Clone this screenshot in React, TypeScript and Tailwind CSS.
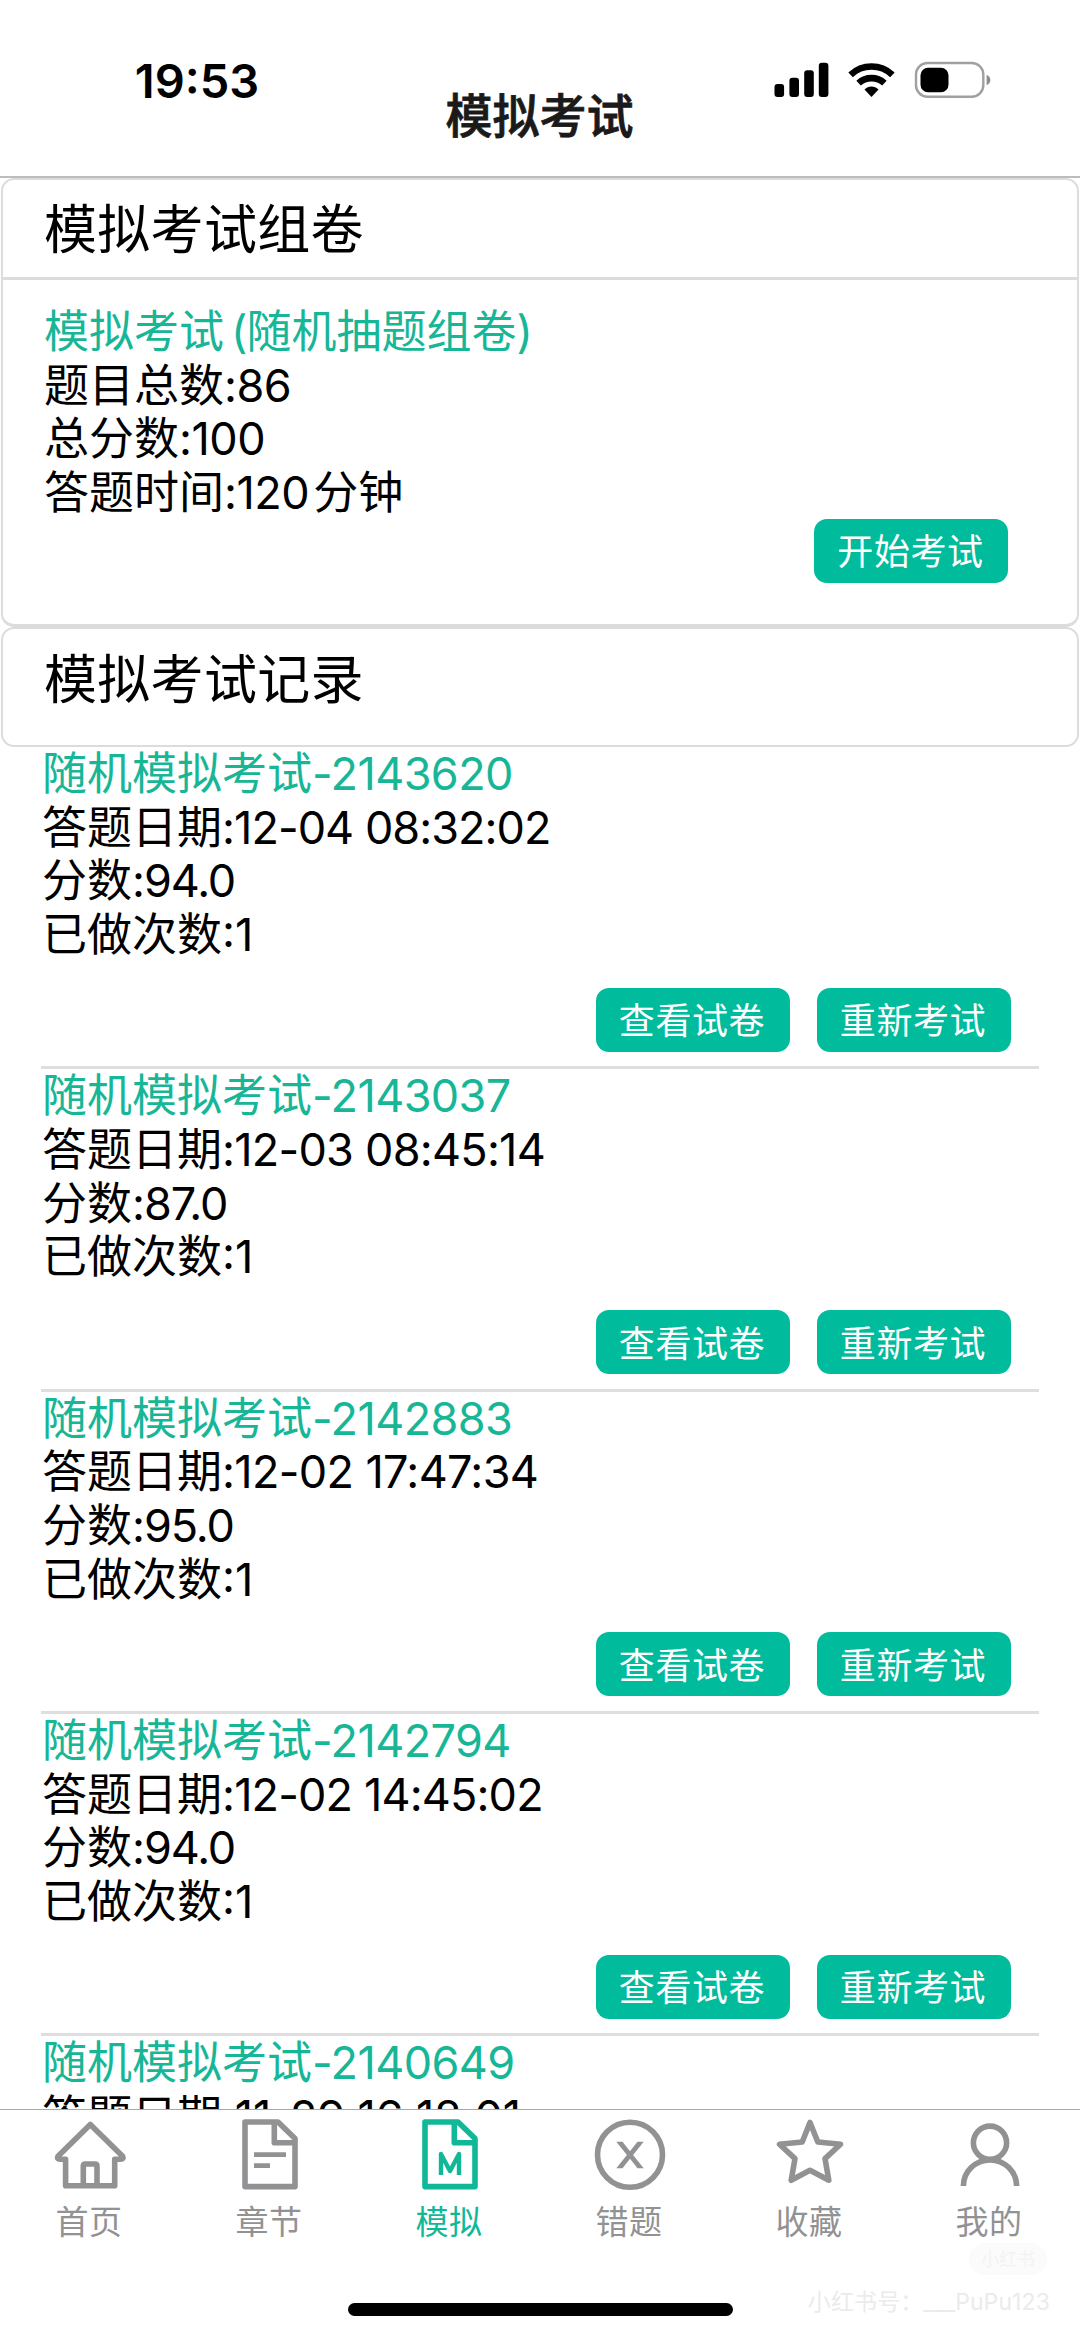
import type { ReactNode } from "react";
import clsx from "clsx";

type ExamRecord = {
  id: string;
  date: string;
  dateClass: string;
  score?: string;
  times?: number;
};

const RECORDS: ExamRecord[] = [
  { id: "2143620", date: "12-04 08:32:02", dateClass: "tracking-[-0.95px]", score: "94.0", times: 1 },
  { id: "2143037", date: "12-03 08:45:14", dateClass: "tracking-[-0.75px]", score: "87.0", times: 1 },
  { id: "2142883", date: "12-02 17:47:34", dateClass: "tracking-[-0.65px]", score: "95.0", times: 1 },
  { id: "2142794", date: "12-02 14:45:02", dateClass: "tracking-[-0.85px]", score: "94.0", times: 1 },
  { id: "2140649", date: "11-29 16:18:01", dateClass: "tracking-[-0.2px]" },
];

function StatusIcons() {
  return (
    <svg width="217" height="38" viewBox="774 61 217 38">
      <rect x="774.5" y="84" width="9.6" height="13" rx="3" />
      <rect x="789.4" y="77.7" width="9.6" height="19.3" rx="3" />
      <rect x="804.2" y="70.3" width="9.6" height="26.7" rx="3" />
      <rect x="818.8" y="62.8" width="9.6" height="34.2" rx="3" />
      <g fill="none" stroke="#000" strokeWidth="6.6">
        <path d="M850.6 74.8a30.5 30.5 0 0 1 41.8 0" />
        <path d="M858.6 83.2a19 19 0 0 1 25.8 0" />
      </g>
      <path d="M871.5 97l-7-7.4c3.8-4 10.2-4 14 0z" />
      <rect x="916" y="63" width="67.3" height="33.8" rx="11.5" fill="none" stroke="#a0a0a0" strokeWidth="2.4" />
      <rect x="920.5" y="67.7" width="28" height="24.6" rx="7.5" />
      <path d="M986.6 75c5 1.5 5 8.5 0 10z" fill="#8e8e8e" />
    </svg>
  );
}

function GreenButton({ children }: { children: ReactNode }) {
  return (
    <button className="flex h-16 w-[194px] items-center justify-center rounded-[13px] bg-[#00bc9c] pt-[3px] pr-px text-[36px] leading-none tracking-[0.6px] text-white">
      {children}
    </button>
  );
}

function RecordItem({ record }: { record: ExamRecord }) {
  return (
    <li
      className={clsx(
        "flex shrink-0 flex-col pl-px text-[45px] leading-[53.7px]",
        record.score && "h-[322.3px] border-b-[3px] border-[#dedede]",
      )}
    >
      <p className="text-[#17b697]">
        随机模拟考试<span className="tracking-[-0.6px]">-{record.id}</span>
      </p>
      <p>
        答题日期<span className={record.dateClass}>:{record.date}</span>
      </p>
      {record.score && (
        <>
          <p>
            分数<span className="tracking-[-1.1px]">:{record.score}</span>
          </p>
          <p>已做次数:{record.times}</p>
          <div className="mt-[26px] flex justify-end gap-[27px] pr-[28.5px]">
            <GreenButton>查看试卷</GreenButton>
            <GreenButton>重新考试</GreenButton>
          </div>
        </>
      )}
    </li>
  );
}

const TABS: { label: string; icon: ReactNode }[] = [
  {
    label: "首页",
    icon: (
      <>
        <path d="M36.3 5.5L4 37.2Q2.6 40.3 6 40.3H11.6V66.7H60.7V40.3H66.6Q70 40.3 68.6 37.2Z" />
        <path d="M29.3 66.7V47Q29.3 45 31.3 45H41Q43 45 43 47V66.7" />
      </>
    ),
  },
  {
    label: "章节",
    icon: (
      <>
        <path d="M11 3H44L61 19.5V67.6H11Z" />
        <path d="M40.3 3V23.7H61" />
        <path d="M20 35.7H52M20 46.7H36" strokeWidth="4.8" />
      </>
    ),
  },
  {
    label: "模拟",
    icon: (
      <>
        <path d="M11 3H44L61 19.5V67.6H11Z" />
        <path d="M40.3 3V23.7H61" />
        <path d="M27 56V35L36 52L45 35V56" strokeWidth="4.4" />
      </>
    ),
  },
  {
    label: "错题",
    icon: (
      <>
        <circle cx="36" cy="35.8" r="32.5" />
        <path
          d="M22.3 22.7H28.5L36 32.2L43.5 22.7H49.7L39.1 36L49.7 49.3H43.5L36 39.8L28.5 49.3H22.3L32.9 36Z"
          fill="currentColor"
          stroke="none"
        />
      </>
    ),
  },
  {
    label: "收藏",
    icon: (
      <path
        d="M36 3.5L43.8 23L66.5 25.3L51 39.6L54.8 61.3L36 51.3L17.2 61.3L21 39.6L5.5 25.3L28.2 23Z"
        strokeWidth="5.6"
      />
    ),
  },
  {
    label: "我的",
    icon: (
      <>
        <circle cx="36" cy="23.7" r="16.6" />
        <path d="M9.4 67A26.6 26 0 0 1 62.6 67" />
      </>
    ),
  },
];

function TabBar({ active }: { active: string }) {
  return (
    <nav className="flex h-[230px] shrink-0 flex-col border-t border-[#a8a8a8] bg-white">
      <div className="flex pt-[9px]">
        {TABS.map((tab) => (
          <div
            key={tab.label}
            className={clsx(
              "flex w-[180px] flex-col items-center",
              tab.label === active ? "text-[#10b898]" : "text-[#929294]",
            )}
          >
            <svg
              width="72"
              height="72"
              viewBox="0 0 72 72"
              fill="none"
              stroke="currentColor"
              strokeWidth="5.6"
              strokeLinejoin="round"
            >
              {tab.icon}
            </svg>
            <span className="mt-[14px] -ml-[2px] text-[33px] leading-[34px] tracking-[0.5px]">
              {tab.label}
            </span>
          </div>
        ))}
      </div>
      <div className="relative mt-[64px] flex justify-center">
        <div className="h-[13px] w-[385px] rounded-full bg-black" />
        <div className="absolute -top-[60px] right-[33px] flex h-8 w-[78px] items-center justify-center rounded-full bg-[#fbfbfb] text-[18px] text-[#f3f3f3]">
          小红书
        </div>
        <p className="absolute -top-[15px] right-[30px] text-[23px] leading-[28px] tracking-[0.1px] whitespace-nowrap text-[#ebebeb]">
          小红书号：___PuPu123
        </p>
      </div>
    </nav>
  );
}

export default function App() {
  return (
    <div className="flex h-[2339px] w-[1080px] flex-col overflow-hidden bg-white font-[Inter,'Noto_Sans_CJK_SC',sans-serif] text-black">
      <header className="flex h-[178px] shrink-0 border-b-2 border-[#bcbcbc]">
        <div className="w-[394px] pt-[52px] text-center text-[47px] leading-[58px] font-semibold">19:53</div>
        <h1 className="flex-1 pt-[88px] text-center text-[47px] leading-[56px] font-medium whitespace-nowrap text-[#1a1a1a] [-webkit-text-stroke:0.8px_#1a1a1a]">
          模拟考试
        </h1>
        <div className="flex w-[395px] justify-center pt-[61px]">
          <StatusIcons />
        </div>
      </header>

      <main className="flex min-h-0 flex-1 flex-col overflow-hidden">
        <section className="mx-px h-[449px] shrink-0 rounded-[13px] border-2 border-b-[3px] border-[#dcdcdc]">
          <h2 className="flex h-[100px] items-center border-b-[3px] border-[#dcdcdc] pt-[3px] pl-[41px] text-[53px] leading-none tracking-[0.3px]">
            模拟考试组卷
          </h2>
          <div className="px-[41px] pt-[25px] text-[45px] leading-[53.7px]">
            <p className="text-[#17b697]">
              模拟考试<span className="ml-[7px]">(</span>
              <span className="-ml-px">随机抽题组卷)</span>
            </p>
            <p>
              题目总数<span className="tracking-[-0.5px]">:86</span>
            </p>
            <p>
              总分数<span className="tracking-[-0.5px]">:100</span>
            </p>
            <p>
              答题时间<span className="tracking-[-0.5px]">:120</span>
              <span className="ml-[4px]">分钟</span>
            </p>
            <div className="-mt-px flex justify-end pr-[28px]">
              <GreenButton>开始考试</GreenButton>
            </div>
          </div>
        </section>
        <section className="mx-px h-[120px] shrink-0 rounded-[13px] border-2 border-[#dcdcdc]">
          <h2 className="flex h-[98px] items-center pt-[4px] pl-[41px] text-[53px] leading-none tracking-[0.3px]">
            模拟考试记录
          </h2>
        </section>
        <ul className="mx-[41px] flex flex-col">
          {RECORDS.map((record) => (
            <RecordItem key={record.id} record={record} />
          ))}
        </ul>
      </main>

      <TabBar active="模拟" />
    </div>
  );
}
